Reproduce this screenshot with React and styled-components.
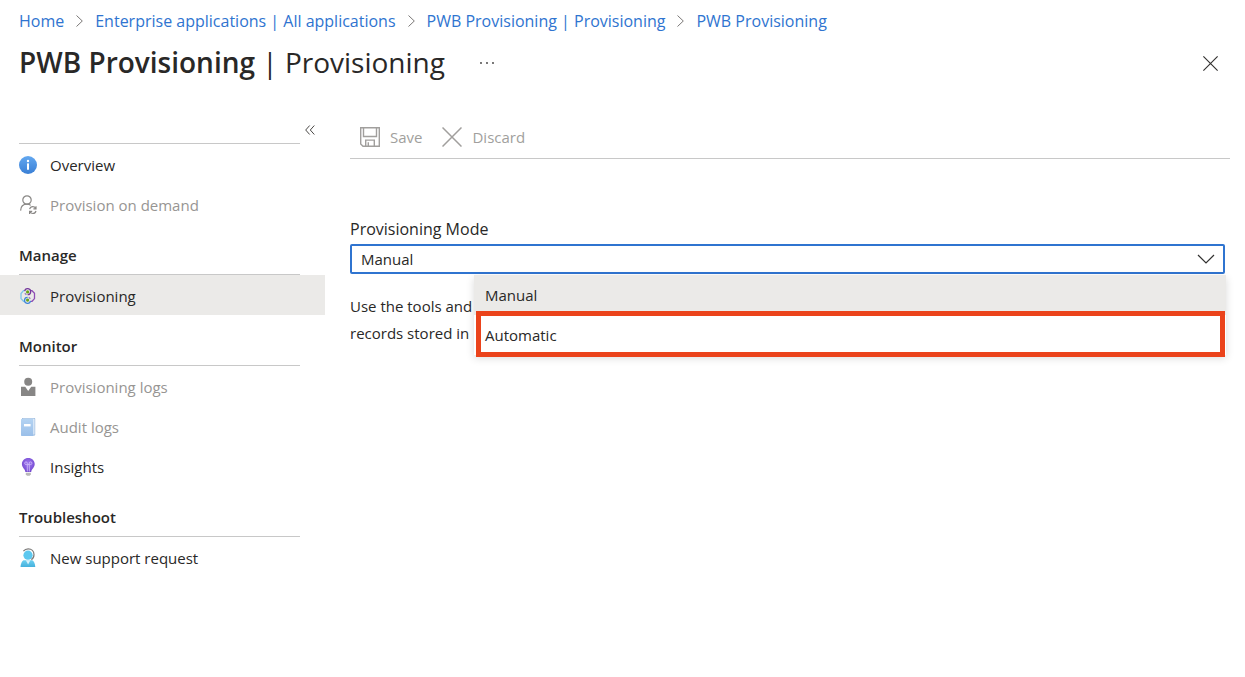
import { useState } from 'react';
import styled, { createGlobalStyle } from 'styled-components';

const GlobalStyle = createGlobalStyle`
  * {
    box-sizing: border-box;
  }

  body {
    margin: 0;
    background: #ffffff;
    color: #292827;
    font-family: 'Open Sans', 'Noto Sans', sans-serif;
    font-size: 15px;
    line-height: 24px;
  }

  button,
  select {
    font: inherit;
    color: inherit;
  }
`;

const Page = styled.div`
  min-height: 100vh;
`;

const Header = styled.header`
  padding: 9px 20px 0 19px;
`;

const Breadcrumb = styled.nav`
  display: flex;
  align-items: center;
  gap: 12px;
  font-size: 16px;
  white-space: nowrap;
`;

const Crumb = styled.a`
  color: #2f74d0;
  text-decoration: none;
`;

const TitleRow = styled.div`
  display: flex;
  align-items: center;
  height: 60px;
`;

const Title = styled.h1`
  margin: 0;
  padding-bottom: 2px;
  font-size: 28px;
  font-weight: 600;
  line-height: 40px;
  white-space: nowrap;

  span {
    font-weight: 400;
  }
`;

const IconButton = styled.button`
  display: flex;
  align-items: center;
  justify-content: center;
  width: 20px;
  height: 20px;
  padding: 0;
  border: 0;
  background: none;
  cursor: pointer;
`;

const MoreButton = styled(IconButton)`
  margin-left: 32px;
`;

const CloseButton = styled(IconButton)`
  margin-left: auto;
  margin-right: 5px;
`;

const Body = styled.div`
  display: flex;
  align-items: flex-start;
  padding-top: 20px;
`;

const Sidebar = styled.nav`
  flex: 0 0 325px;
`;

const SearchRow = styled.div`
  display: flex;
  height: 31px;
`;

const SearchLine = styled.div`
  flex: 1;
  margin-left: 19px;
  border-bottom: 1px solid #c8c8c8;
`;

const CollapseButton = styled(IconButton)`
  margin: 7px 5px 0 0;
`;

const GroupTitle = styled.h2`
  height: 51px;
  margin: 0 25px 0 19px;
  padding-top: 19px;
  border-bottom: 1px solid #c8c8c8;
  font-size: 15px;
  font-weight: 600;
  line-height: 24px;
`;

const ItemList = styled.ul`
  margin: 0;
  padding: 0;
  list-style: none;
`;

const ItemLink = styled.a`
  display: flex;
  align-items: center;
  gap: 13px;
  height: 40px;
  padding: 2px 19px 0;
  color: ${(props) => (props.$muted ? '#979593' : '#292827')};
  background: ${(props) => (props.$active ? '#ebeae8' : 'transparent')};
  text-decoration: none;

  svg {
    flex: none;
  }
`;

const Main = styled.main`
  flex: 1;
  min-width: 0;
  padding: 0 15px 0 25px;
`;

const Toolbar = styled.div`
  display: flex;
  gap: 20px;
  height: 46px;
  padding: 0 10px;
  border-bottom: 1px solid #c8c8c8;
`;

const ToolButton = styled.button`
  display: flex;
  align-items: center;
  gap: 10px;
  height: 46px;
  padding: 2px 0 0;
  border: 0;
  background: none;

  &:disabled {
    color: #a19f9d;
  }
`;

const Form = styled.form`
  padding: 58px 5px 0 0;
`;

const Label = styled.label`
  display: block;
  height: 27px;
  font-size: 16px;
`;

const Field = styled.div`
  position: relative;
`;

const Select = styled.select`
  display: block;
  width: 100%;
  height: 30px;
  padding: 0 36px 0 9px;
  border: 2px solid #2f74d0;
  border-radius: 2px;
  outline: none;
  background: #ffffff;
  appearance: none;
`;

const SelectArrow = styled.svg`
  position: absolute;
  top: 10px;
  right: 10px;
  pointer-events: none;
`;

const Menu = styled.ul`
  position: absolute;
  top: 31px;
  left: 124px;
  right: -1px;
  margin: 0;
  padding: 0;
  background: #ffffff;
  box-shadow: 0 3px 8px rgba(0, 0, 0, 0.15);
  list-style: none;
`;

const Option = styled.li`
  position: relative;
  height: 40px;
  padding: 0 11px;
  line-height: 40px;
  background: ${(props) => (props.$selected ? '#ebeae8' : '#ffffff')};
  cursor: pointer;
`;

const Highlight = styled.span`
  position: absolute;
  inset: -4px 1px -2px 2px;
  border: 5px solid #eb431b;
  pointer-events: none;
`;

const Hint = styled.p`
  margin: 19px 0 0;
  line-height: 27px;
`;

function Chevron() {
  return (
    <svg width="7" height="12" viewBox="0 0 7 12" fill="none" stroke="#7a7876" aria-hidden="true">
      <path d="M.5 .5 6.3 6 .5 11.5" />
    </svg>
  );
}

function InfoIcon() {
  return (
    <svg width="18" height="18" viewBox="0 0 18 18" aria-hidden="true">
      <defs>
        <linearGradient id="info" x1="0" y1="0" x2="0" y2="1">
          <stop offset="0" stopColor="#63a8f0" />
          <stop offset="1" stopColor="#3a7fd5" />
        </linearGradient>
      </defs>
      <circle cx="9" cy="9" r="9" fill="url(#info)" />
      <circle cx="9" cy="5" r="1.2" fill="#fff" />
      <rect x="8" y="7.2" width="2" height="6.6" rx=".6" fill="#fff" />
    </svg>
  );
}

function UserSyncIcon() {
  return (
    <svg width="18" height="20" viewBox="0 0 18 20" fill="none" stroke="#8a8886" strokeWidth="1.2" aria-hidden="true">
      <circle cx="8" cy="5" r="4.2" />
      <path d="M1.6 15.6c.2-4.2 2.8-6.4 6.400-6.400 1.5 0 2.7.4 3.7 1.2" />
      <path d="M10.6 14.2c.5-1.7 1.7-2.5 3.200-2.500 1.200 0 2.200.6 2.800 1.700M17 11.2v2.600h-2.600" />
      <path d="M17 16c-.5 1.7-1.7 2.500-3.200 2.500-1.200 0-2.200-.6-2.800-1.700M10.6 19v-2.600h2.600" />
    </svg>
  );
}

function ProvisioningIcon() {
  return (
    <svg width="18" height="18" viewBox="0 0 18 18" fill="none" strokeWidth="1.3" aria-hidden="true">
      <path d="M5.4 3.7h-.9L2 6.6v5l2.500 2.700h1.200" stroke="#7cc4ea" />
      <path d="M11.6 3.700h1.400l2.500 2.600v5.300l-2.400 2.700h-1.500" stroke="#8f4fb4" />
      <path d="M5.700 4.200a3 3 0 1 1 2.900 3.500" stroke="#74389b" />
      <path d="M11.500 13.800a3 3 0 1 1-2.900-3.500" stroke="#3f86d8" />
      <circle cx="8.600" cy="4.900" r="1.600" fill="#6aa51c" />
      <circle cx="8.600" cy="13.100" r="1.600" fill="#6aa51c" />
      <path d="M5.800 6.200l1.600 1.500M11.400 11.800l-1.600-1.500" stroke="#9c7fc0" />
    </svg>
  );
}

function PersonIcon() {
  return (
    <svg width="18" height="20" viewBox="0 0 18 20" fill="#878685" aria-hidden="true">
      <circle cx="9.2" cy="4.7" r="4" />
      <path d="M2 9.800h4.200l3 4.200 3-4.200h4.200v9.200H2z" />
    </svg>
  );
}

function BookIcon() {
  return (
    <svg width="18" height="20" viewBox="0 0 18 20" aria-hidden="true">
      <defs>
        <linearGradient id="book" x1="0" y1="0" x2="0" y2="1">
          <stop offset="0" stopColor="#b4d3f2" />
          <stop offset="1" stopColor="#9abfe9" />
        </linearGradient>
      </defs>
      <path d="M3 1h12.200c.6 0 1 .4 1 1v15.400c0 .6-.4 1-1 1H3z" fill="#8fb3dc" />
      <path d="M3.500 1.600h12v16h-12z" fill="#f3f7fc" />
      <path d="M3 2h11.400v17H3c-.6 0-1-.4-1-1V2.500c0-.4.4-.5 1-.5z" fill="url(#book)" />
      <rect x="5" y="7" width="6.6" height="2.4" fill="#fff" />
    </svg>
  );
}

function BulbIcon() {
  return (
    <svg width="18" height="20" viewBox="0 0 18 20" aria-hidden="true">
      <defs>
        <radialGradient id="bulb" cx=".5" cy=".4" r=".6">
          <stop offset="0" stopColor="#a07af0" />
          <stop offset="1" stopColor="#7347cf" />
        </radialGradient>
      </defs>
      <path d="M9.300 1C5.600 1 2.900 3.700 2.900 7c0 3.800 3.100 4.600 3.500 8h5.800c.4-3.400 3.500-4.200 3.500-8 0-3.300-2.700-6-6.400-6z" fill="url(#bulb)" />
      <path d="M8.300 14.500V7.400M10.300 14.500V7.400M8.300 7.500H7.200a1.300 1.300 0 1 1 1.100-1.300zM10.300 7.500h1.100a1.300 1.300 0 1 0-1.100-1.300zM8.300 7.500h2" fill="none" stroke="#ccb8f8" strokeWidth=".9" />
      <path d="M6.800 15.800h5v1.600l-1.200 1.400H8l-1.200-1.400z" fill="#b9b9b9" />
    </svg>
  );
}

function SupportIcon() {
  return (
    <svg width="18" height="20" viewBox="0 0 18 20" aria-hidden="true">
      <defs>
        <linearGradient id="support" x1="0" y1="0" x2="0" y2="1">
          <stop offset="0" stopColor="#6ccff0" />
          <stop offset="1" stopColor="#45b0dc" />
        </linearGradient>
      </defs>
      <path d="M4.400 12.200h9c1.600 1 2.700 3.500 2.900 6.800H1.500c.2-3.300 1.300-5.800 2.900-6.800z" fill="url(#support)" />
      <path d="M6.800 12.200h4.600l-2.300 4.300z" fill="#d8f1fa" />
      <circle cx="9" cy="7.2" r="4.6" fill="#5cc8ef" />
      <path d="M4.400 3.200C5.700 1.500 7.300.8 9.200.8c3.400 0 5.800 2.500 5.800 5.800 0 2.200-.9 4.200-2.700 5" fill="none" stroke="#7c7b7a" strokeWidth="1.2" />
    </svg>
  );
}

function SaveIcon() {
  return (
    <svg width="20" height="20" viewBox="0 0 20 20" fill="none" stroke="#a19f9d" strokeWidth="1.4" aria-hidden="true">
      <path d="M.7.7h18.600v18.600H3L.7 17z" />
      <path d="M3.500.7v8.800h13V.7M5.700 19.300v-6.200h8.600v6.200M8.300 15.200v4" />
    </svg>
  );
}

function CrossIcon({ size, color }) {
  return (
    <svg width={size} height={size} viewBox="0 0 20 20" fill="none" stroke={color} strokeWidth="1.5" aria-hidden="true">
      <path d="M.5.5l19 19M19.500.5l-19 19" />
    </svg>
  );
}

const groups = [
  {
    items: [
      { label: 'Overview', icon: InfoIcon },
      { label: 'Provision on demand', icon: UserSyncIcon, muted: true },
    ],
  },
  {
    title: 'Manage',
    items: [{ label: 'Provisioning', icon: ProvisioningIcon, active: true }],
  },
  {
    title: 'Monitor',
    items: [
      { label: 'Provisioning logs', icon: PersonIcon, muted: true },
      { label: 'Audit logs', icon: BookIcon, muted: true },
      { label: 'Insights', icon: BulbIcon },
    ],
  },
  {
    title: 'Troubleshoot',
    items: [{ label: 'New support request', icon: SupportIcon }],
  },
];

const modes = ['Manual', 'Automatic'];

function SideMenu() {
  return (
    <Sidebar aria-label="Application">
      <SearchRow>
        <SearchLine />
        <CollapseButton aria-label="Collapse menu">
          <svg width="10" height="10" viewBox="0 0 10 10" fill="none" stroke="#4a4846">
            <path d="M4.700.5.700 5l4 4.500M9.300.5l-4 4.500 4 4.500" />
          </svg>
        </CollapseButton>
      </SearchRow>
      {groups.map((group) => (
        <section key={group.title || 'general'}>
          {group.title && <GroupTitle>{group.title}</GroupTitle>}
          <ItemList>
            {group.items.map(({ label, icon: Icon, muted, active }) => (
              <li key={label}>
                <ItemLink href="#" $muted={muted} $active={active}>
                  <Icon />
                  {label}
                </ItemLink>
              </li>
            ))}
          </ItemList>
        </section>
      ))}
    </Sidebar>
  );
}

export default function App() {
  const [mode, setMode] = useState('Manual');

  return (
    <Page>
      <GlobalStyle />
      <Header>
        <Breadcrumb aria-label="Breadcrumb">
          <Crumb href="#">Home</Crumb>
          <Chevron />
          <Crumb href="#">Enterprise applications | All applications</Crumb>
          <Chevron />
          <Crumb href="#">PWB Provisioning | Provisioning</Crumb>
          <Chevron />
          <Crumb href="#">PWB Provisioning</Crumb>
        </Breadcrumb>
        <TitleRow>
          <Title>
            PWB Provisioning <span>| Provisioning</span>
          </Title>
          <MoreButton aria-label="More">
            <svg width="14" height="2" viewBox="0 0 14 2" fill="#3b3a39">
              <circle cx="1" cy="1" r=".9" />
              <circle cx="7" cy="1" r=".9" />
              <circle cx="13" cy="1" r=".9" />
            </svg>
          </MoreButton>
          <CloseButton aria-label="Close">
            <CrossIcon size={15} color="#323130" />
          </CloseButton>
        </TitleRow>
      </Header>
      <Body>
        <SideMenu />
        <Main>
          <Toolbar>
            <ToolButton disabled>
              <SaveIcon />
              Save
            </ToolButton>
            <ToolButton disabled>
              <CrossIcon size={20} color="#a19f9d" />
              Discard
            </ToolButton>
          </Toolbar>
          <Form>
            <Label htmlFor="mode">Provisioning Mode</Label>
            <Field>
              <Select id="mode" value={mode} onChange={(e) => setMode(e.target.value)}>
                {modes.map((name) => (
                  <option key={name}>{name}</option>
                ))}
              </Select>
              <SelectArrow width="18" height="10" viewBox="0 0 18 10" fill="none" stroke="#323130" strokeWidth="1.2">
                <path d="M1 1l8 8 8-8" />
              </SelectArrow>
              <Menu role="listbox" aria-label="Provisioning Mode">
                {modes.map((name) => (
                  <Option
                    key={name}
                    role="option"
                    aria-selected={name === mode}
                    $selected={name === mode}
                    onClick={() => setMode(name)}
                  >
                    {name}
                    {name === 'Automatic' && <Highlight />}
                  </Option>
                ))}
              </Menu>
            </Field>
            <Hint>
              Use the tools and
              <br />
              records stored in
            </Hint>
          </Form>
        </Main>
      </Body>
    </Page>
  );
}
